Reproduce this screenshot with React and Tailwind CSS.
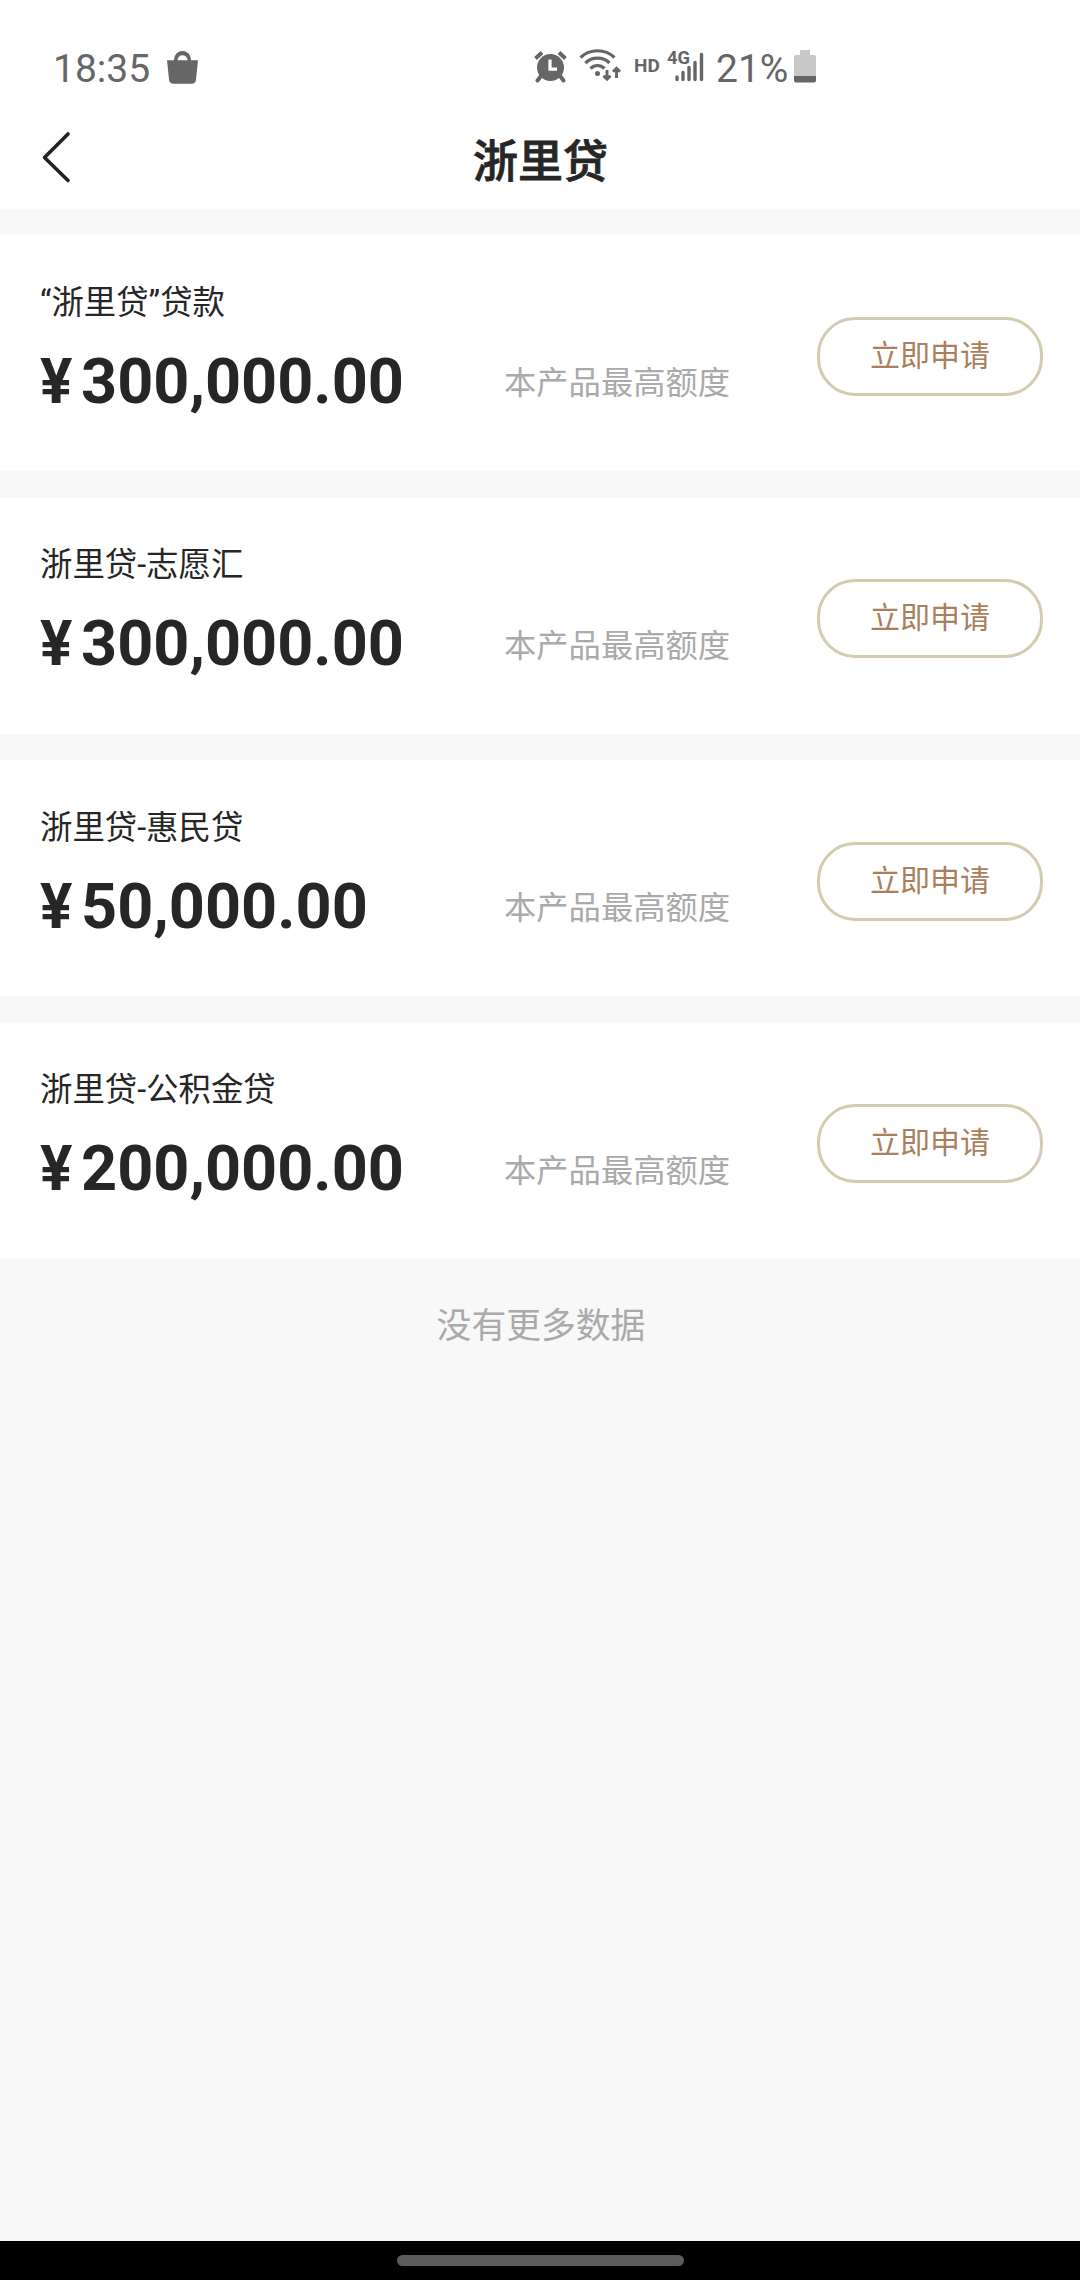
import React from 'react';

const products = [
  { id: 1, name: '“浙里贷”贷款', amount: '300,000.00' },
  { id: 2, name: '浙里贷-志愿汇', amount: '300,000.00' },
  { id: 3, name: '浙里贷-惠民贷', amount: '50,000.00' },
  { id: 4, name: '浙里贷-公积金贷', amount: '200,000.00' },
];

function BagIcon() {
  return (
    <svg className="ml-[18px] mt-[51px] h-[33px] w-[31px]" viewBox="0 0 31 33" fill="#666">
      <path d="M0 9.200H31L29 28.500Q28.500 32.800 24.500 32.800H6.500Q2.500 32.800 2 28.500Z" />
      <path d="M7 10V8.500a8.500 8.500 0 0 1 17 0V10Z" />
      <path d="M10.500 9.200a5 5 0 0 1 10 0Z" fill="#fff" />
    </svg>
  );
}

function AlarmIcon() {
  return (
    <svg className="ml-[336px] mt-[50px] h-[33px] w-[33px]" viewBox="0 0 33 33">
      <circle cx="16.500" cy="17.500" r="13.500" fill="#666" />
      <path d="M1.500 8.500 8 2.500M31.500 8.500 25 2.500" stroke="#666" strokeWidth="4" />
      <path d="m7 26-3.500 4.500M26 26l3.500 4.500" stroke="#666" strokeWidth="4" strokeLinecap="round" />
      <path d="M16 9.500V19.200H23" fill="none" stroke="#fff" strokeWidth="3.200" />
    </svg>
  );
}

function WifiIcon() {
  return (
    <svg className="ml-[12px] mt-[49px] h-[33px] w-[43px]" viewBox="0 0 43 33" fill="none" stroke="#666" strokeWidth="3.200">
      <path d="M1.500 8.500C11 -.5 26 -.5 35.500 8.500" />
      <path d="M6.500 14C13 7.500 24 7.500 30.500 14" />
      <path d="M11.500 19.500C15.500 15.500 21.500 15.500 25.500 19.500" />
      <circle cx="18.500" cy="24.500" r="2.500" fill="#666" stroke="none" />
      <path d="M28 21V31M24.500 26.800 28 30.300 31.500 26.800" strokeWidth="2.900" />
      <path d="M37.500 29V19M34 22.700 37.500 19.200 41 22.700" strokeWidth="2.900" />
    </svg>
  );
}

function SignalIcon() {
  return (
    <svg className="h-[38px] w-[37px]" viewBox="0 0 37 38">
      <text
        x="0"
        y="17"
        fontSize="19"
        fontWeight="700"
        fill="#666"
        textLength="23"
        lengthAdjust="spacingAndGlyphs"
        fontFamily="Roboto, sans-serif"
      >
        4G
      </text>
      <path
        d="M10 32.500V30M16 32.500V25.500M22 32.500V20.500M28 32.500V15.500M34.500 32.500V7.500"
        stroke="#666"
        strokeWidth="3.400"
        strokeLinecap="round"
      />
    </svg>
  );
}

function BatteryIcon() {
  return (
    <svg className="ml-[6px] mt-[50px] h-[33px] w-[22px]" viewBox="0 0 22 33">
      <path d="M6 0H16V5H20Q22 5 22 7V26H0V7Q0 5 2 5H6Z" fill="#c8c8c8" />
      <path d="M0 26H22V30.500Q22 32.500 20 32.500H2Q0 32.500 0 30.500Z" fill="#666" />
    </svg>
  );
}

function StatusBar() {
  return (
    <div className="flex h-[110px] items-start pl-[53px] text-[#666]">
      <span className="mt-[46px] w-[96px] whitespace-nowrap text-[39px] leading-[46px]">18:35</span>
      <BagIcon />
      <AlarmIcon />
      <WifiIcon />
      <span className="ml-[12px] mt-[54px] w-[28px] text-[19px] font-bold leading-[24px]">HD</span>
      <div className="ml-[5px] mt-[47px]">
        <SignalIcon />
      </div>
      <span className="ml-[12px] mt-[46px] w-[72px] whitespace-nowrap text-[39px] leading-[46px]">21%</span>
      <BatteryIcon />
    </div>
  );
}

function ProductCard({ product }) {
  return (
    <div className="mt-[26.25px] flex h-[236.25px] bg-white pl-[40px] pr-[37px]">
      <div className="w-[464px] pt-[44.500px]">
        <h3 className="text-[32.4px] leading-[46px]">{product.name}</h3>
        <p className="mt-[18px] flex whitespace-nowrap text-[63px] font-bold leading-[76px]">
          <span className="w-[41px]">
            <span className="inline-block origin-left scale-x-[0.960]">¥</span>
          </span>
          <span>{product.amount}</span>
        </p>
      </div>
      <p className="mt-[125px] text-[32.3px] leading-[46px] text-[#aaa]">本产品最高额度</p>
      <button className="ml-auto mt-[81.500px] h-[79px] w-[226px] rounded-[38px] border-3 border-[#d3ccb0] pb-[1px] text-[30px] leading-[40px] text-[#a97f5c]">
        立即申请
      </button>
    </div>
  );
}

export default function App() {
  return (
    <div className="flex h-[2280px] w-[1080px] flex-col bg-[#f8f8f8] font-[Roboto,'Noto_Sans_CJK_SC',sans-serif] text-[#262626]">
      <header className="h-[208.75px] bg-white">
        <StatusBar />
        <div className="flex h-[98px] items-start">
          <svg className="ml-[41px] mt-[21px] h-[53px] w-[32px]" viewBox="0 0 32 53" fill="none" stroke="#222" strokeWidth="3.600" strokeLinecap="round" strokeLinejoin="round">
            <path d="M27 3 3.500 26.500 27 49.500" />
          </svg>
          <h1 className="mr-[72px] mt-[20px] flex-1 text-center text-[45px] font-medium leading-[66px] [-webkit-text-stroke:0.8px_#262626]">浙里贷</h1>
        </div>
      </header>

      <main className="flex-1">
        {products.map((item) => (
          <ProductCard key={item.id} product={item} />
        ))}
        <p className="mt-[41px] pl-[2px] text-center text-[34.8px] leading-[52px] text-[#aaa]">没有更多数据</p>
      </main>

      <footer className="flex h-[39px] justify-center bg-black pt-[14px]">
        <div className="h-[11px] w-[287px] rounded-full bg-[#5c5c5c]" />
      </footer>
    </div>
  );
}
